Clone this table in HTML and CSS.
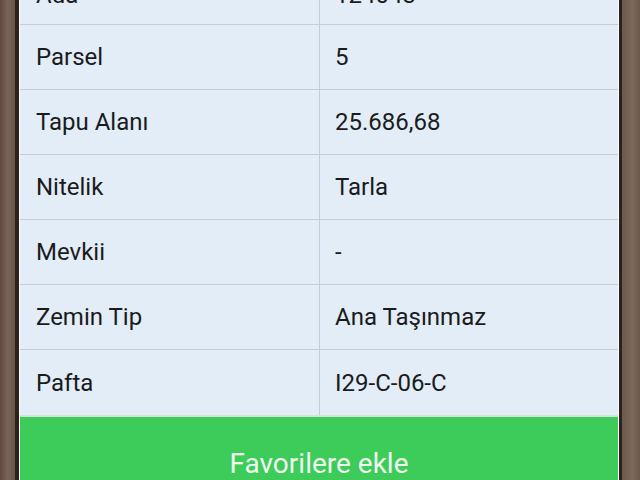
FILE: index.html
```html
<!DOCTYPE html>
<html lang="tr">
<head>
<meta charset="utf-8">
<title>Parsel Bilgileri</title>
<link rel="stylesheet" href="styles.css">
</head>
<body>
<div class="frame">
  <div class="card">
    <div class="table">
      <div class="row first"><div class="cell">Ada</div><div class="cell val">124043</div></div>
      <div class="row"><div class="cell">Parsel</div><div class="cell val">5</div></div>
      <div class="row"><div class="cell">Tapu Alanı</div><div class="cell val">25.686,68</div></div>
      <div class="row"><div class="cell">Nitelik</div><div class="cell val">Tarla</div></div>
      <div class="row"><div class="cell">Mevkii</div><div class="cell val">-</div></div>
      <div class="row"><div class="cell">Zemin Tip</div><div class="cell val">Ana Taşınmaz</div></div>
      <div class="row"><div class="cell">Pafta</div><div class="cell val">I29-C-06-C</div></div>
    </div>
    <div class="fav" role="button">Favorilere ekle</div>
  </div>
</div>
</body>
</html>
```

FILE: styles.css
```css
html, body {
  margin: 0;
  padding: 0;
  height: 480px;
  overflow: hidden;
}
body {
  background: linear-gradient(90deg, #5e4a40 0px, #7a655a 8px, #6a554a 14px, #6a554a 620px, #7d685c 632px, #6c574c 640px);
  font-family: Roboto, "Liberation Sans", sans-serif;
}
.frame {
  padding: 0 18px 0 15px;
  margin-top: -40px;
}
.card {
  border-left: 4px solid #2b221d;
  border-right: 3px solid #2b221d;
  background: #ffffff;
  padding: 0 1px;
}
.table {
  background: #e2edf8;
}
.row {
  display: grid;
  grid-template-columns: 299px 1fr;
  height: 64px;
  border-bottom: 1px solid #c6ccd1;
}
.row.first .cell {
  padding-top: 6px;
}
.cell {
  display: flex;
  align-items: center;
  padding-left: 16px;
  font-size: 24px;
  color: #1b1b1b;
}
.cell.val {
  border-left: 1px solid #c6ccd1;
  padding-left: 15px;
}
.row:last-child {
  height: 65px;
  border-bottom: 2px solid #cfe6d4;
}
.fav {
  padding: 33px 0 29px;
  background: #3dcb5a;
  color: #eef8ee;
  font-size: 28px;
  line-height: 28px;
  text-align: center;
}
```
